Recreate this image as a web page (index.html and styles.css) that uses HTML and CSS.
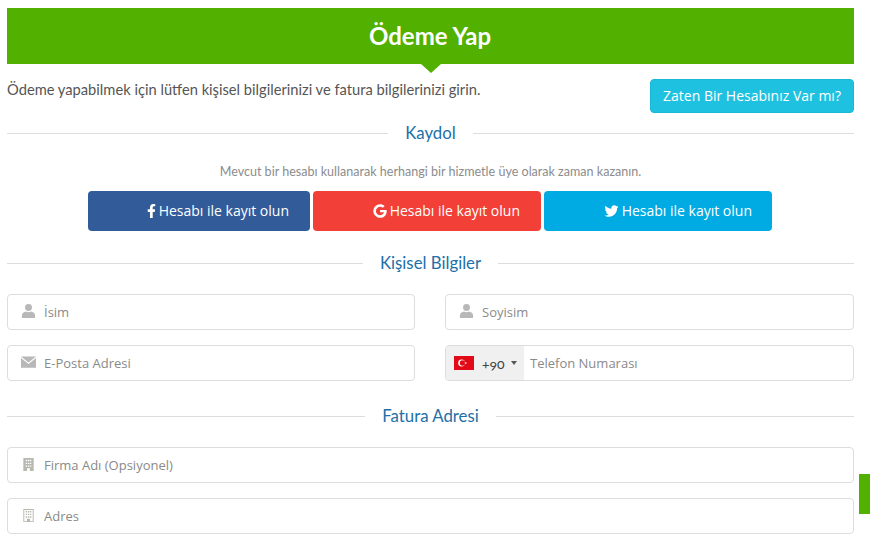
FILE: index.html
```html
<!DOCTYPE html>
<html lang="tr">
<head>
  <meta charset="UTF-8" />
  <meta name="viewport" content="width=device-width, initial-scale=1.0" />
  <title>Ödeme Yap</title>
  <link rel="stylesheet" href="styles.css">
</head>
<body>
  <div class="page">
    <header class="title-bar">
      <h1>Ödeme Yap</h1>
    </header>

    <div class="intro">
      <p>Ödeme yapabilmek için lütfen kişisel bilgilerinizi ve fatura bilgilerinizi girin.</p>
      <a href="#" class="btn-login">Zaten Bir Hesabınız Var mı?</a>
    </div>

    <h2 class="divider divider-first"><span>Kaydol</span></h2>
    <p class="note">Mevcut bir hesabı kullanarak herhangi bir hizmetle üye olarak zaman kazanın.</p>

    <div class="social">
      <a href="#" class="social-btn fb">
        <svg class="icon-f" viewBox="0 0 320 512"><path d="M279.14 288l14.22-92.66h-88.91v-60.13c0-25.35 12.42-50.06 52.24-50.06h40.42V6.26S260.43 0 225.36 0c-73.22 0-121.08 44.38-121.08 124.72v70.62H22.89V288h81.39v224h100.17V288z"/></svg>
        Hesabı ile kayıt olun
      </a>
      <a href="#" class="social-btn google">
        <svg class="icon-g" viewBox="0 0 488 512"><path d="M488 261.8C488 403.3 391.1 504 248 504 110.8 504 0 393.2 0 256S110.8 8 248 8c66.8 0 123 24.5 166.3 64.9l-67.5 64.9C258.5 52.6 94.3 116.6 94.3 256c0 86.5 69.1 156.6 153.7 156.6 98.2 0 135-70.4 140.8-106.9H248v-85.3h236.1c2.3 12.7 3.9 24.9 3.9 41.4z"/></svg>
        Hesabı ile kayıt olun
      </a>
      <a href="#" class="social-btn twitter">
        <svg class="icon-t" viewBox="0 0 512 512"><path d="M459.37 151.716c.325 4.548.325 9.097.325 13.645 0 138.72-105.583 298.558-298.558 298.558-59.452 0-114.68-17.219-161.137-47.106 8.447.974 16.568 1.299 25.34 1.299 49.055 0 94.213-16.568 130.274-44.832-46.132-.975-84.792-31.188-98.112-72.772 6.498.974 12.995 1.624 19.818 1.624 9.421 0 18.843-1.3 27.614-3.573-48.081-9.747-84.143-51.98-84.143-102.985v-1.299c13.969 7.797 30.214 12.67 47.431 13.319-28.264-18.843-46.781-51.005-46.781-87.391 0-19.492 5.197-37.36 14.294-52.954 51.655 63.675 129.3 105.258 216.365 109.807-1.624-7.797-2.599-15.918-2.599-24.04 0-57.828 46.782-104.934 104.934-104.934 30.213 0 57.502 12.67 76.67 33.137 23.715-4.548 46.456-13.32 66.599-25.34-7.798 24.366-24.366 44.833-46.132 57.827 21.117-2.273 41.584-8.122 60.426-16.243-14.292 20.791-32.161 39.308-52.628 54.253z"/></svg>
        Hesabı ile kayıt olun
      </a>
    </div>

    <h2 class="divider divider-personal"><span>Kişisel Bilgiler</span></h2>

    <div class="form-grid">
      <label class="field">
        <svg class="field-icon" viewBox="0 0 16 16"><circle cx="8" cy="3.8" r="3.7"/><path d="M1 15v-2.800c0-2.400 2.200-3.800 4.300-4.100 1.500.8 3.900.8 5.400 0 2.100.3 4.300 1.700 4.300 4.100V15z"/></svg>
        <input type="text" placeholder="İsim" />
      </label>
      <label class="field">
        <svg class="field-icon" viewBox="0 0 16 16"><circle cx="8" cy="3.8" r="3.7"/><path d="M1 15v-2.800c0-2.400 2.200-3.800 4.300-4.100 1.500.8 3.900.8 5.400 0 2.100.3 4.300 1.700 4.300 4.100V15z"/></svg>
        <input type="text" placeholder="Soyisim" />
      </label>
      <label class="field">
        <svg class="field-icon" viewBox="0 0 16 16"><path d="M0 1.500h16L8 8z"/><path d="M0 3.200V13.500h16V3.200L8 9.700z"/></svg>
        <input type="email" placeholder="E-Posta Adresi" />
      </label>
      <div class="field phone">
        <div class="dial">
          <svg class="flag" viewBox="0 0 20 14"><rect width="20" height="14" fill="#e30a17"/><circle cx="7.600" cy="7" r="3.400" fill="#fff"/><circle cx="8.500" cy="7" r="2.700" fill="#e30a17"/><path d="M10.200 7l2.600-.9-1.600 2.200V5.700l1.600 2.200z" fill="#fff"/></svg>
          <span class="dial-code">+90</span>
          <span class="caret"></span>
        </div>
        <input class="phone-input" type="tel" placeholder="Telefon Numarası" />
      </div>
    </div>

    <h2 class="divider divider-address"><span>Fatura Adresi</span></h2>

    <div class="form-stack">
      <label class="field">
        <svg class="field-icon building" viewBox="0 0 16 16"><path fill-rule="evenodd" d="M2.500 1h11v14H9.500v-3h-3v3h-4zM5 3v1.500h1.500V3zm2.300 0v1.500h1.500V3zm2.200 0v1.500H11V3zM5 6v1.500h1.500V6zm2.300 0v1.500h1.500V6zm2.200 0v1.500H11V6zM5 9v1.500h1.500V9zm2.300 0v1.500h1.500V9zm2.200 0v1.500H11V9z"/></svg>
        <input type="text" placeholder="Firma Adı (Opsiyonel)" />
      </label>
      <label class="field">
        <svg class="field-icon building" viewBox="0 0 16 16"><path fill-rule="evenodd" d="M2.500 1h11v14h-11zm1 1v12h2.800v-2.500h3.400V14h2.800V2zM5 3.200h1.500v1.500H5zm2.300 0h1.500v1.500H7.300zm2.200 0H11v1.500H9.500zM5 6h1.500v1.500H5zm2.300 0h1.500v1.500H7.300zm2.200 0H11v1.500H9.500zM5 8.800h1.500v1.500H5zm2.300 0h1.500v1.500H7.300zm2.200 0H11v1.500H9.500z"/></svg>
        <input type="text" placeholder="Adres" />
      </label>
    </div>
  </div>

  <div class="side-tab"></div>
</body>
</html>
```

FILE: styles.css
```css
* {
  margin: 0;
  padding: 0;
  box-sizing: border-box;
}

body {
  font-family: 'Lato', sans-serif;
  background-color: #fff;
  color: #555;
  overflow: hidden;
}

.page {
  padding: 8px 16px 0 7px;
}

.title-bar {
  position: relative;
  height: 56px;
  background: #52b000;
  display: flex;
  align-items: center;
  justify-content: center;
  padding: 0 1px 2px 0;
}

.title-bar::after {
  content: "";
  position: absolute;
  left: 50%;
  bottom: -9px;
  margin-left: -10px;
  border-left: 10px solid transparent;
  border-right: 10px solid transparent;
  border-top: 9px solid #52b000;
}

.title-bar h1 {
  color: #fff;
  font-size: 24px;
  font-weight: 700;
}

.intro {
  display: flex;
  justify-content: space-between;
  align-items: flex-start;
  margin-top: 15px;
}

.intro p {
  font-size: 14.7px;
  line-height: 20px;
  color: #555;
}

.btn-login {
  width: 204px;
  height: 34px;
  line-height: 32px;
  text-align: center;
  font-family: 'Open Sans', sans-serif;
  font-size: 14px;
  color: #fff;
  text-decoration: none;
  background: #1fc1e0;
  border: 1px solid #1ab8d6;
  border-radius: 4px;
}

.divider {
  display: flex;
  align-items: center;
  gap: 17px;
  height: 20px;
  font-size: 16.8px;
  font-weight: 400;
  color: #2270a8;
}

.divider span {
  margin-top: -2px;
}

.divider::before,
.divider::after {
  content: "";
  flex: 1;
  height: 1px;
  background: #ddd;
}

.divider-first {
  margin-top: 10px;
}

.divider-personal {
  margin-top: 22px;
}

.divider-address {
  margin-top: 25px;
}

.note {
  margin-top: 21px;
  text-align: center;
  font-size: 12.55px;
  line-height: 16px;
  color: #8c8c8c;
}

.social {
  display: flex;
  justify-content: center;
  gap: 3px;
  margin-top: 11px;
  padding-right: 1px;
}

.social-btn {
  width: 228px;
  height: 40px;
  display: flex;
  align-items: center;
  justify-content: flex-end;
  gap: 3px;
  padding: 0 21px 1px 0;
  font-family: 'Open Sans', sans-serif;
  font-size: 14px;
  color: #fff;
  text-decoration: none;
  border-radius: 4px;
}

.social-btn svg {
  fill: #fff;
}

.fb {
  width: 222px;
  background: #325b99;
}

.google {
  background: #f23f37;
}

.twitter {
  background: #00abe3;
  padding-right: 20px;
}

.icon-f {
  width: 9px;
  height: 14px;
}

.icon-g {
  width: 14px;
  height: 14px;
}

.icon-t {
  width: 15px;
  height: 14px;
}

.form-grid {
  display: grid;
  grid-template-columns: 408px 409px;
  column-gap: 30px;
  row-gap: 15px;
  margin-top: 21px;
}

.form-stack {
  display: flex;
  flex-direction: column;
  gap: 15px;
  margin-top: 21px;
}

.field {
  height: 36px;
  display: flex;
  align-items: center;
  padding-left: 13px;
  gap: 8px;
  background: #fff;
  border: 1px solid #ddd;
  border-radius: 4px;
  overflow: hidden;
}

.field-icon {
  width: 15px;
  height: 15px;
  flex: none;
  fill: #b8b8b8;
  margin-top: -2px;
}

.building {
  fill: #b8b8b0;
}

.field input {
  flex: 1;
  min-width: 0;
  border: none;
  outline: none;
  background: transparent;
  font-family: 'Open Sans', sans-serif;
  font-size: 13px;
  color: #555;
}

.field input::placeholder {
  color: #8a8a8a;
  opacity: 1;
}

.phone {
  padding-left: 0;
  gap: 6px;
}

.dial {
  width: 78px;
  height: 100%;
  display: flex;
  align-items: center;
  padding-left: 8px;
  background: #f0f0f0;
}

.flag {
  width: 20px;
  height: 14px;
}

.dial-code {
  margin-left: 8px;
  font-size: 14px;
  font-variant-numeric: oldstyle-nums;
  color: #444;
}

.caret {
  margin-left: 6px;
  border-left: 3px solid transparent;
  border-right: 3px solid transparent;
  border-top: 4px solid #555;
}

.side-tab {
  position: fixed;
  top: 474px;
  right: 0;
  width: 11px;
  height: 40px;
  background: #52b000;
}
```
